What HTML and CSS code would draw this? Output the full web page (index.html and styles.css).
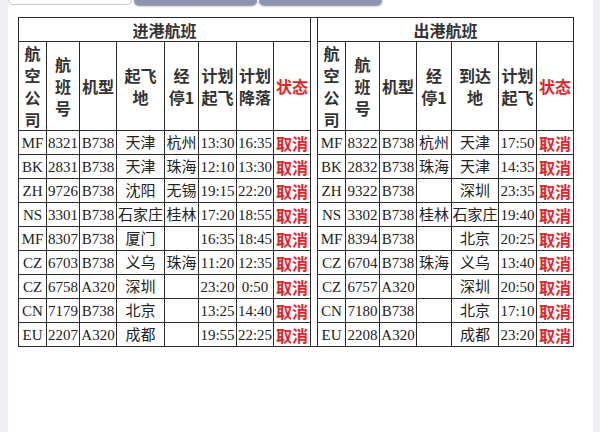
FILE: index.html
```html
<!DOCTYPE html>
<html lang="zh">
<head>
<meta charset="utf-8">
<title>航班</title>
<link rel="stylesheet" href="styles.css">
</head>
<body>
<div class="panel">
  <div class="tabs">
    <div class="tab tab-white"></div>
    <div class="tab tab-blue"></div>
    <div class="tab tab-blue"></div>
  </div>
  <table class="flights">
    <colgroup>
      <col class="c28"><col class="c33"><col class="c37"><col class="c48"><col class="c34"><col class="c38"><col class="c37"><col class="c37">
      <col class="c7">
      <col class="c28"><col class="c34"><col class="c37"><col class="c35"><col class="c47"><col class="c38"><col class="c37">
    </colgroup>
    <tr class="title-row">
      <th colspan="8">进港航班</th>
      <td class="gap" rowspan="11"></td>
      <th colspan="7">出港航班</th>
    </tr>
    <tr class="head-row">
      <th>航<br>空<br>公<br>司</th><th>航<br>班<br>号</th><th>机型</th><th>起飞<br>地</th><th>经<br>停1</th><th>计划<br>起飞</th><th>计划<br>降落</th><th class="red">状态</th>
      <th>航<br>空<br>公<br>司</th><th>航<br>班<br>号</th><th>机型</th><th>经<br>停1</th><th>到达<br>地</th><th>计划<br>起飞</th><th class="red">状态</th>
    </tr>
    <tr><td>MF</td><td>8321</td><td>B738</td><td>天津</td><td>杭州</td><td>13:30</td><td>16:35</td><td class="red">取消</td>
        <td>MF</td><td>8322</td><td>B738</td><td>杭州</td><td>天津</td><td>17:50</td><td class="red">取消</td></tr>
    <tr><td>BK</td><td>2831</td><td>B738</td><td>天津</td><td>珠海</td><td>12:10</td><td>13:30</td><td class="red">取消</td>
        <td>BK</td><td>2832</td><td>B738</td><td>珠海</td><td>天津</td><td>14:35</td><td class="red">取消</td></tr>
    <tr><td>ZH</td><td>9726</td><td>B738</td><td>沈阳</td><td>无锡</td><td>19:15</td><td>22:20</td><td class="red">取消</td>
        <td>ZH</td><td>9322</td><td>B738</td><td></td><td>深圳</td><td>23:35</td><td class="red">取消</td></tr>
    <tr><td>NS</td><td>3301</td><td>B738</td><td>石家庄</td><td>桂林</td><td>17:20</td><td>18:55</td><td class="red">取消</td>
        <td>NS</td><td>3302</td><td>B738</td><td>桂林</td><td>石家庄</td><td>19:40</td><td class="red">取消</td></tr>
    <tr><td>MF</td><td>8307</td><td>B738</td><td>厦门</td><td></td><td>16:35</td><td>18:45</td><td class="red">取消</td>
        <td>MF</td><td>8394</td><td>B738</td><td></td><td>北京</td><td>20:25</td><td class="red">取消</td></tr>
    <tr><td>CZ</td><td>6703</td><td>B738</td><td>义乌</td><td>珠海</td><td>11:20</td><td>12:35</td><td class="red">取消</td>
        <td>CZ</td><td>6704</td><td>B738</td><td>珠海</td><td>义乌</td><td>13:40</td><td class="red">取消</td></tr>
    <tr><td>CZ</td><td>6758</td><td>A320</td><td>深圳</td><td></td><td>23:20</td><td>0:50</td><td class="red">取消</td>
        <td>CZ</td><td>6757</td><td>A320</td><td></td><td>深圳</td><td>20:50</td><td class="red">取消</td></tr>
    <tr><td>CN</td><td>7179</td><td>B738</td><td>北京</td><td></td><td>13:25</td><td>14:40</td><td class="red">取消</td>
        <td>CN</td><td>7180</td><td>B738</td><td></td><td>北京</td><td>17:10</td><td class="red">取消</td></tr>
    <tr><td>EU</td><td>2207</td><td>A320</td><td>成都</td><td></td><td>19:55</td><td>22:25</td><td class="red">取消</td>
        <td>EU</td><td>2208</td><td>A320</td><td></td><td>成都</td><td>23:20</td><td class="red">取消</td></tr>
  </table>
</div>
</body>
</html>
```
FILE: styles.css
```css
html, body {
  margin: 0;
  padding: 0;
  background: #efeff4;
}
.panel {
  margin: 0 7px 0 8px;
  height: 432px;
  background: #ffffff;
  overflow: hidden;
}
.tabs {
  display: flex;
  gap: 2px;
  height: 5px;
}
.tab {
  height: 5px;
  box-sizing: border-box;
}
.tab-white {
  width: 124px;
  border: 1px solid #c8c8cc;
  border-top: none;
  border-radius: 0 0 5px 5px;
  background: #ffffff;
}
.tab-blue {
  width: 123px;
  background: #8c94b2;
  border-radius: 0 0 6px 6px;
  box-shadow: 0 1px 2px rgba(40, 45, 70, 0.6);
}
.flights {
  margin: 12px 0 0 10px;
  border-collapse: collapse;
  table-layout: fixed;
  width: 555px;
  font-family: "Liberation Serif", "Noto Sans CJK SC", serif;
  font-size: 15px;
  color: #222;
}
.c7 { width: 7px; }
.c28 { width: 28px; }
.c33 { width: 33px; }
.c34 { width: 34px; }
.c35 { width: 35px; }
.c37 { width: 37px; }
.c38 { width: 38px; }
.c47 { width: 47px; }
.c48 { width: 48px; }
.flights th,
.flights td {
  border: 1px solid #2a2a2a;
  padding: 0;
  text-align: center;
  vertical-align: middle;
  white-space: nowrap;
  overflow: hidden;
}
.flights th {
  font-family: "Noto Sans CJK SC", sans-serif;
  font-weight: bold;
  font-size: 16px;
  line-height: 22px;
  color: #333;
}
.title-row {
  height: 24px;
}
.title-row th {
  line-height: 20px;
}
.head-row {
  height: 91px;
}
.flights tr {
  height: 24px;
}
.flights td {
  line-height: 20px;
}
.flights .gap {
  border-top: 1px solid #2a2a2a;
}
.flights .red {
  color: #e0262b;
  font-family: "Noto Sans CJK SC", sans-serif;
  font-weight: bold;
  font-size: 16px;
}
```
